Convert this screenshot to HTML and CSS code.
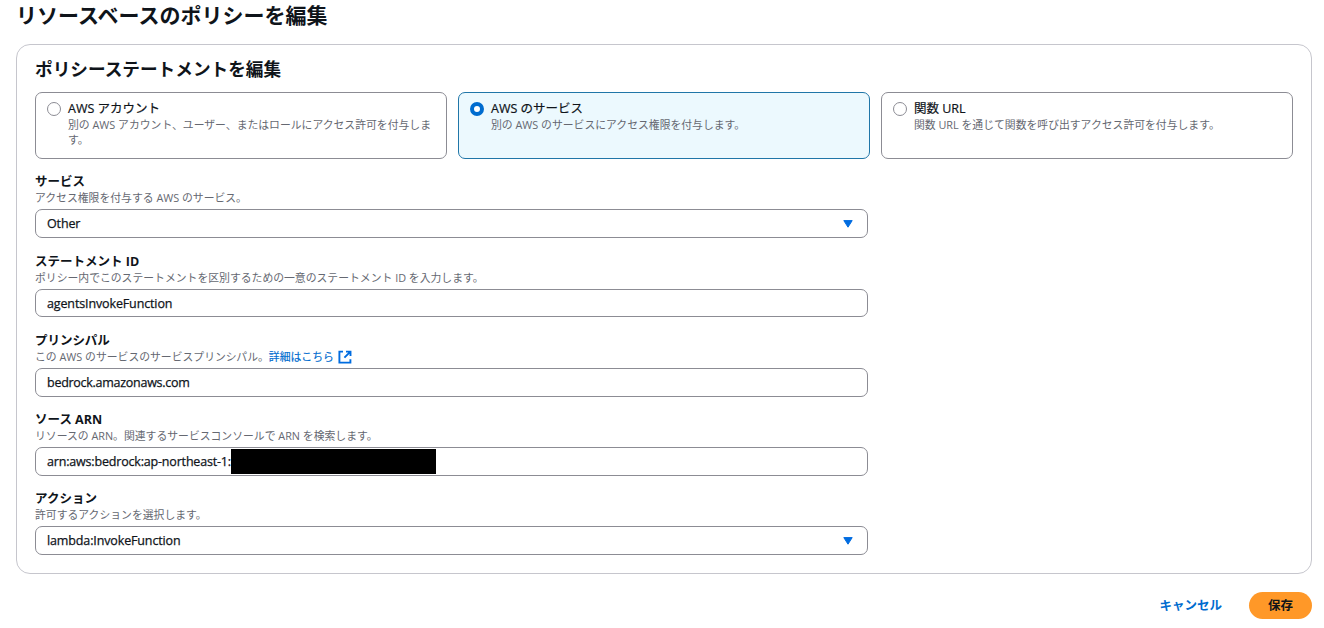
FILE: index.html
```html
<!DOCTYPE html>
<html lang="ja">
<head>
<meta charset="utf-8">
<title>リソースベースのポリシーを編集</title>
<link rel="stylesheet" href="styles.css">
</head>
<body>
<main class="page">
  <h1 class="page-title">リソースベースのポリシーを編集</h1>
  <section class="panel">
    <h2 class="panel-title">ポリシーステートメントを編集</h2>
    <div class="tiles">
      <div class="tile">
        <span class="radio"></span>
        <div><div class="tile-label">AWS アカウント</div><div class="hint">別の AWS アカウント、ユーザー、またはロールにアクセス許可を付与します。</div></div>
      </div>
      <div class="tile tile-selected">
        <span class="radio radio-on"></span>
        <div><div class="tile-label">AWS のサービス</div><div class="hint">別の AWS のサービスにアクセス権限を付与します。</div></div>
      </div>
      <div class="tile">
        <span class="radio"></span>
        <div><div class="tile-label">関数 URL</div><div class="hint">関数 URL を通じて関数を呼び出すアクセス許可を付与します。</div></div>
      </div>
    </div>
    <div class="fields">
      <div class="field">
        <div class="label">サービス</div>
        <div class="hint">アクセス権限を付与する AWS のサービス。</div>
        <div class="control"><span class="value">Other</span><svg class="caret" viewBox="0 0 10 8"><path d="M.8.6h8.4L5 7.2Z" fill="#006ce0" stroke="#006ce0" stroke-linejoin="round"/></svg></div>
      </div>
      <div class="field field-short">
        <div class="label">ステートメント ID</div>
        <div class="hint">ポリシー内でこのステートメントを区別するための一意のステートメント ID を入力します。</div>
        <div class="control"><span class="value">agentsInvokeFunction</span></div>
      </div>
      <div class="field">
        <div class="label">プリンシパル</div>
        <div class="hint">この AWS のサービスのサービスプリンシパル。<a class="link">詳細はこちら<svg class="external" viewBox="0 0 14 14" fill="none" stroke="#006ce0" stroke-width="1.9"><path d="M5 1.6H1.4v11h11V9.2M8 1.6h4.5v4.5M12.4 1.6 6.4 7.6"/></svg></a></div>
        <div class="control"><span class="value value-dense">bedrock.amazonaws.com</span></div>
      </div>
      <div class="field">
        <div class="label">ソース ARN</div>
        <div class="hint">リソースの ARN。関連するサービスコンソールで ARN を検索します。</div>
        <div class="control"><span class="value value-arn">arn:aws:bedrock:ap-northeast-1:</span><span class="mask"></span></div>
      </div>
      <div class="field">
        <div class="label">アクション</div>
        <div class="hint">許可するアクションを選択します。</div>
        <div class="control"><span class="value">lambda:InvokeFunction</span><svg class="caret" viewBox="0 0 10 8"><path d="M.8.6h8.4L5 7.2Z" fill="#006ce0" stroke="#006ce0" stroke-linejoin="round"/></svg></div>
      </div>
    </div>
  </section>
  <div class="actions">
    <a class="cancel">キャンセル</a>
    <button class="save">保存</button>
  </div>
</main>
</body>
</html>
```
FILE: styles.css
```css
* { box-sizing: border-box; }
body {
  margin: 0;
  background: #fff;
  color: #0f141a;
  font-family: "Open Sans", "Noto Sans CJK JP", sans-serif;
  font-size: 12.5px;
}
.page { padding: 0 12px 0 16px; }
.page-title { margin: 0; height: 44px; line-height: 31px; font-size: 21px; font-weight: 700; }
.panel { height: 530px; padding: 12px 18px; border: 1px solid #c6c6cd; border-radius: 14px; }
.panel-title { margin: 0 0 10px; line-height: 25px; font-size: 17.65px; font-weight: 700; }
.tiles { display: grid; grid-template-columns: repeat(3, 1fr); gap: 11px; }
.tile { display: flex; gap: 7px; height: 67px; padding: 7px 11px; border: 1px solid #8c8c94; border-radius: 7px; }
.tile-selected { background: #ecf9fe; border-color: #2076a8; }
.radio { flex: none; width: 14px; height: 14px; margin-top: 2px; border: 1.5px solid #8c8c94; border-radius: 50%; background: #fff; }
.radio-on { border: 4.5px solid #006ccf; }
.tile-label { line-height: 17px; -webkit-text-stroke: .2px; }
.hint { color: #656871; font-size: 10.84px; line-height: 15px; }
.fields { width: 833px; margin-top: 14px; }
.field { margin-bottom: 14px; }
.field:first-child, .field-short { margin-bottom: 15px; }
.label { height: 17px; line-height: 17px; font-weight: 700; }
.field .hint { height: 19px; line-height: 15px; white-space: nowrap; }
.control { display: flex; align-items: center; height: 29px; padding: 0 14px 0 11px; border: 1px solid #8c8c94; border-radius: 7px; }
.field-short .control { height: 28px; }
.value { letter-spacing: -.13px; -webkit-text-stroke: .25px; }
.value-dense { letter-spacing: -.27px; }
.value-arn { width: 184px; letter-spacing: -.18px; white-space: nowrap; }
.caret { width: 10px; height: 8px; margin-left: auto; }
.mask { width: 205px; height: 25px; background: #000; }
.link { color: #006ccf; -webkit-text-stroke: .15px; }
.external { width: 14px; height: 14px; margin-left: 4px; vertical-align: -3px; }
.actions { display: flex; justify-content: flex-end; align-items: center; gap: 27px; padding-top: 18px; font-weight: 700; }
.cancel { color: #006ccf; padding-bottom: 2px; }
.save { width: 63px; height: 27px; padding: 0 0 2px; border: 0; border-radius: 14px; background: #ff9828; color: #0f141a; font: inherit; }
```
